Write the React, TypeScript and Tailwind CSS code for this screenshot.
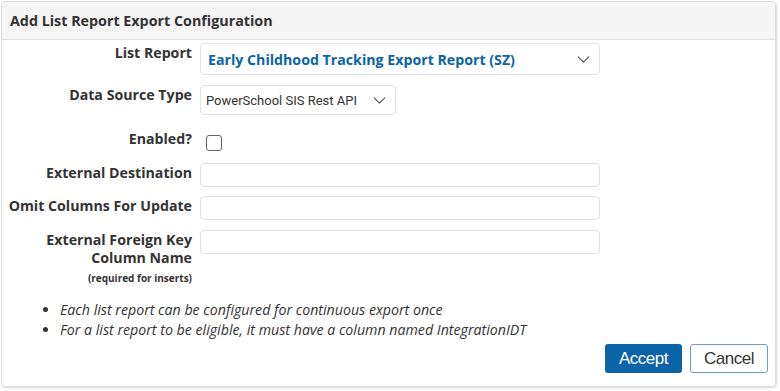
import { ChevronDown } from "lucide-react";

const textFields = [
    { label: "External Destination", mt: "mt-[12px]" },
    { label: "Omit Columns For Update", mt: "mt-[9px]" },
];

export default function App() {
    return (
        <div className="w-[780px] h-[391px] bg-white p-[1px] font-['Open_Sans',sans-serif]">
            <div className="w-[775px] h-[386px] rounded-[4px] border border-[#dcdcdc] shadow-[1px_1px_2px_rgba(0,0,0,0.15)] flex flex-col overflow-hidden">
                <div className="h-[38px] bg-[#f5f5f5] border-b border-[#e2e2e2] flex items-center px-[8px] shrink-0">
                    <h1 className="text-[14.3px] font-bold text-[#333]">Add List Report Export Configuration</h1>
                </div>
                <div className="flex flex-col text-[14.2px] leading-[19px] text-[#333] pt-[3px]">
                    <div className="flex items-start gap-[8px]">
                        <label className="w-[190px] text-right font-bold">List Report</label>
                        <div className="w-[400px] h-[32px] border border-[#e2e2e2] rounded-[4px] flex items-center justify-between pl-[7px] pr-[5px]">
                            <span className="font-bold text-[#0c64a6]">Early Childhood Tracking Export Report (SZ)</span>
                            <ChevronDown className="w-[21px] h-[21px] text-[#555]" strokeWidth={1.3} />
                        </div>
                    </div>
                    <div className="flex items-start gap-[8px] mt-[10px]">
                        <label className="w-[190px] text-right font-bold">Data Source Type</label>
                        <div className="w-[196px] h-[30px] border border-[#e2e2e2] rounded-[4px] flex items-center justify-between pl-[5px] pr-[5px]">
                            <span className="text-[13px] text-[#333] font-['Roboto',sans-serif]">PowerSchool SIS Rest API</span>
                            <ChevronDown className="w-[21px] h-[21px] text-[#555]" strokeWidth={1.3} />
                        </div>
                    </div>
                    <div className="flex items-start gap-[8px] mt-[14px]">
                        <label className="w-[190px] text-right font-bold">Enabled?</label>
                        <div className="pt-[6px] pl-[6px]">
                            <div className="w-[16px] h-[16px] border-[1.5px] border-[#666] rounded-[3px]" />
                        </div>
                    </div>
                    {textFields.map((f, idx) => (
                        <div key={idx} className={`flex items-start gap-[8px] ${f.mt}`}>
                            <label className="w-[190px] text-right font-bold">{f.label}</label>
                            <div className="w-[400px] h-[24px] border border-[#dbe0ec] rounded-[4px]" />
                        </div>
                    ))}
                    <div className="flex items-start gap-[8px] mt-[10px]">
                        <div className="w-[190px] text-right flex flex-col pt-[1px]">
                            <span className="font-bold leading-[18px]">External Foreign Key</span>
                            <span className="font-bold leading-[18px]">Column Name</span>
                            <span className="text-[10px] font-bold leading-[14px] mt-[4px]">(required for inserts)</span>
                        </div>
                        <div className="w-[400px] h-[24px] border border-[#dbe0ec] rounded-[4px]" />
                    </div>
                    <ul className="list-disc pl-[58px] mt-[15px] italic leading-[20px] text-[#333]">
                        <li>Each list report can be configured for continuous export once</li>
                        <li>For a list report to be eligible, it must have a column named IntegrationIDT</li>
                    </ul>
                    <div className="flex justify-end gap-[8px] pr-[7px] mt-[4px] font-['Liberation_Sans',sans-serif]">
                        <button className="w-[77px] h-[29px] rounded-[3px] bg-[#0c64a6] text-white text-[17px] tracking-[-0.5px]">Accept</button>
                        <button className="w-[78px] h-[29px] rounded-[3px] border border-[#6e9cc4] bg-white text-[#333] text-[17px] tracking-[-0.5px]">Cancel</button>
                    </div>
                </div>
            </div>
        </div>
    );
}
